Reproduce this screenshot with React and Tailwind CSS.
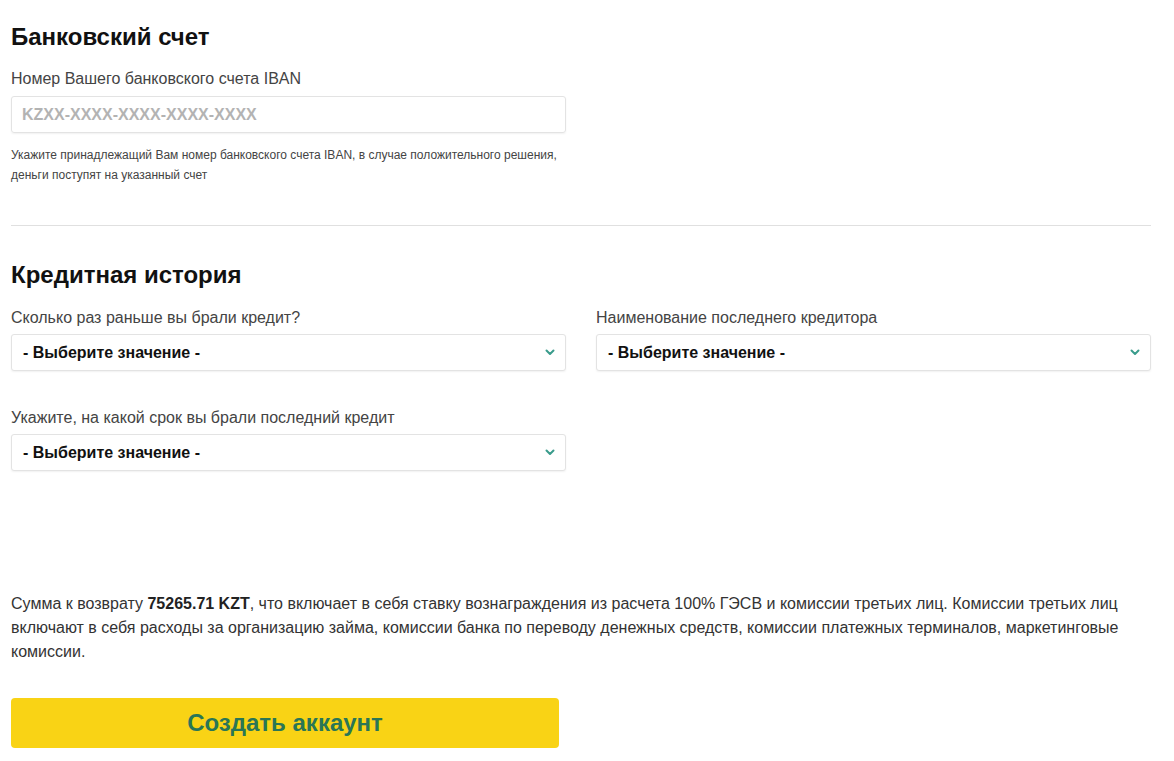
import React from "react";

function Chevron() {
  return (
    <svg width="10" height="7" viewBox="0 0 10 7" fill="none">
      <path d="M1.5 1.5 L5 5 L8.5 1.5" stroke="#3a9c8c" strokeWidth="2" strokeLinecap="round" strokeLinejoin="round" />
    </svg>
  );
}

function Select({ label }) {
  return (
    <div className="flex flex-col">
      <div className="text-[16px] leading-[18px] text-[#444] mb-[7px]">{label}</div>
      <div className="h-[37px] border border-[#e3e3e3] rounded-[3px] shadow-[0_1px_2px_rgba(0,0,0,0.06)] flex items-center justify-between pl-[11px] pr-[10px] bg-white">
        <span className="text-[16px] font-bold text-[#111]">- Выберите значение -</span>
        <Chevron />
      </div>
    </div>
  );
}

export default function App() {
  return (
    <div className="w-[1174px] h-[761px] bg-white overflow-hidden font-['Liberation_Sans',Arial,sans-serif] text-[#333]">
      <div className="pl-[11px] pr-[23px] pt-[23px]">
        <h2 className="text-[24px] leading-[28px] font-bold text-[#111]">Банковский счет</h2>
        <div className="w-[555px] mt-[19px]">
          <div className="text-[16px] leading-[18px] text-[#444] mb-[8px]">Номер Вашего банковского счета IBAN</div>
          <div className="h-[37px] border border-[#e3e3e3] rounded-[3px] shadow-[0_1px_2px_rgba(0,0,0,0.06)] flex items-center pl-[10px]">
            <span className="text-[16px] font-bold text-[#b3b3b3]">KZXX-XXXX-XXXX-XXXX-XXXX</span>
          </div>
          <p className="mt-[12px] text-[12px] leading-[20px] text-[#444]">
            Укажите принадлежащий Вам номер банковского счета IBAN, в случае положительного решения, деньги поступят на указанный счет
          </p>
        </div>
        <div className="h-px bg-[#e0e0e0] mt-[40px]" />
        <h2 className="mt-[35px] text-[24px] leading-[28px] font-bold text-[#111]">Кредитная история</h2>
        <div className="grid grid-cols-2 gap-x-[30px] gap-y-[38px] mt-[20px]">
          <Select label="Сколько раз раньше вы брали кредит?" />
          <Select label="Наименование последнего кредитора" />
          <Select label="Укажите, на какой срок вы брали последний кредит" />
        </div>
        <p className="mt-[121px] text-[16px] leading-[24px] text-[#333]">
          Сумма к возврату <b className="text-[#222]">75265.71 KZT</b>, что включает в себя ставку вознаграждения из расчета 100% ГЭСВ и комиссии третьих лиц. Комиссии третьих лиц включают в себя расходы за организацию займа, комиссии банка по переводу денежных средств, комиссии платежных терминалов, маркетинговые комиссии.
        </p>
        <button className="mt-[34px] w-[548px] h-[50px] rounded-[4px] bg-[#f9d315] text-[#2a7656] text-[24px] font-bold flex items-center justify-center">
          Создать аккаунт
        </button>
      </div>
    </div>
  );
}
